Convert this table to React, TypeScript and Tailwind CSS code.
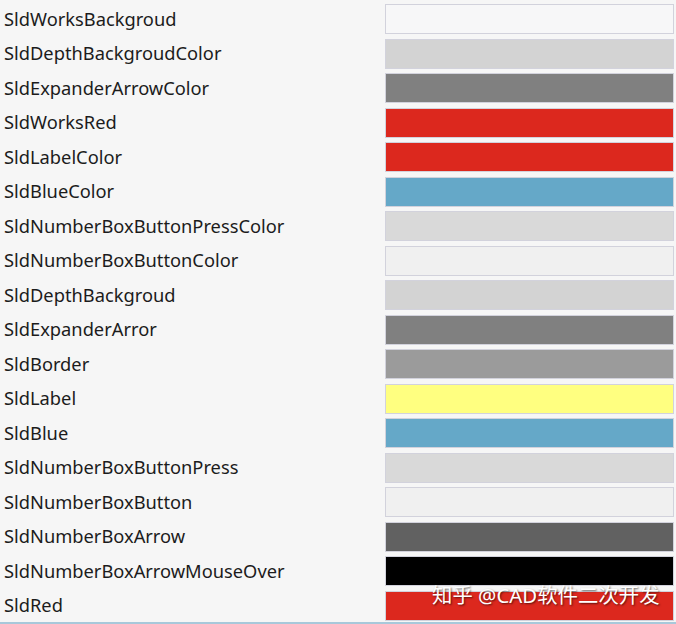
const rows: { name: string; color: string }[] = [
    { name: "SldWorksBackgroud", color: "bg-[#f7f7f8]" },
    { name: "SldDepthBackgroudColor", color: "bg-[#d3d3d3]" },
    { name: "SldExpanderArrowColor", color: "bg-[#808080]" },
    { name: "SldWorksRed", color: "bg-[#dc281e]" },
    { name: "SldLabelColor", color: "bg-[#dc281e]" },
    { name: "SldBlueColor", color: "bg-[#65a8c8]" },
    { name: "SldNumberBoxButtonPressColor", color: "bg-[#d9d9d9]" },
    { name: "SldNumberBoxButtonColor", color: "bg-[#f0f0f0]" },
    { name: "SldDepthBackgroud", color: "bg-[#d3d3d3]" },
    { name: "SldExpanderArror", color: "bg-[#808080]" },
    { name: "SldBorder", color: "bg-[#9b9b9b]" },
    { name: "SldLabel", color: "bg-[#ffff80]" },
    { name: "SldBlue", color: "bg-[#65a8c8]" },
    { name: "SldNumberBoxButtonPress", color: "bg-[#d9d9d9]" },
    { name: "SldNumberBoxButton", color: "bg-[#f0f0f0]" },
    { name: "SldNumberBoxArrow", color: "bg-[#616161]" },
    { name: "SldNumberBoxArrowMouseOver", color: "bg-[#000000]" },
    { name: "SldRed", color: "bg-[#dc281e]" },
];

export default function App() {
    return (
        <div className="relative w-[676px] h-[624px] bg-[#f6f6f6] overflow-hidden font-['Noto_Sans',sans-serif]">
            <div className="pt-[2px]">
                {rows.map((row) => (
                    <div key={row.name} className="flex items-center h-[34.5px]">
                        <div className="w-[385px] pl-[4px] text-[18.3px] text-[#1c1c1c] leading-none -mt-[1px]">{row.name}</div>
                        <div className={`w-[289px] h-[30px] border border-[#d2d2dc] ${row.color}`} />
                    </div>
                ))}
            </div>

            {/* bottom edge */}
            <div className="absolute left-0 right-0 bottom-0 h-[2px] bg-[#a8c8da]" />

            {/* watermark */}
            <div className="absolute left-[432px] top-[580px] text-[20.4px] text-white font-['Noto_Sans','Noto_Sans_CJK_SC',sans-serif] [text-shadow:1px_1px_2px_rgba(0,0,0,0.6)]">
                知乎 @CAD软件二次开发
            </div>
        </div>
    );
}
